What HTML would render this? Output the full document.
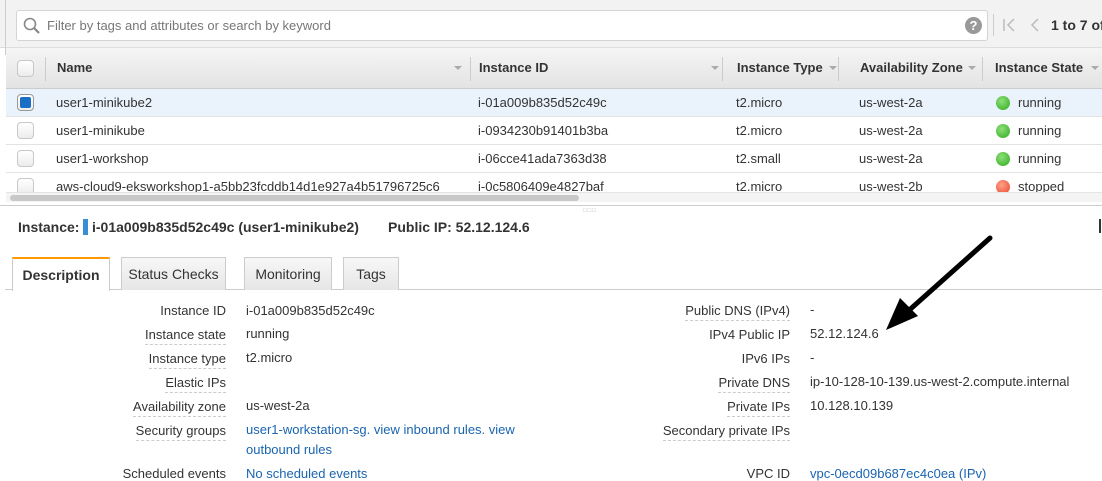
<!DOCTYPE html><html><head><style>
*{box-sizing:border-box;margin:0;padding:0}
body{width:1102px;height:470px;overflow:hidden;background:#fff;font-family:"Liberation Sans",Arial,sans-serif;font-size:13px;color:#333;position:relative}
.a{position:absolute;white-space:nowrap}
.top{position:absolute;left:0;top:0;width:1102px;height:48px;background:#f2f2f2;border-bottom:1px solid #ddd}
.search{position:absolute;left:16px;top:10px;width:972px;height:31px;background:#fff;border:1px solid #d4d4d4;border-radius:3px}
.hdr{position:absolute;left:6px;top:48px;width:1096px;height:41px;background:linear-gradient(#f5f5f5,#e3e3e3);border-bottom:1px solid #ccc}
.hdr b{position:absolute;top:12px;font-size:13px;color:#333}
.sep{position:absolute;top:9px;width:1px;height:24px;background:#ccc}
.arr{position:absolute;top:18px;width:0;height:0;border-left:4px solid transparent;border-right:4px solid transparent;border-top:4px solid #aaa}
.row{position:absolute;left:6px;width:1096px;height:28px;border-bottom:1px solid #e2e2e2}
.row span{position:absolute;top:6px}
.cb{position:absolute;left:11px;top:5px;width:17px;height:17px;border:1px solid #c8c8c8;border-radius:4px;background:linear-gradient(#fff,#ececec)}
.dot{position:absolute;left:990px;top:7px;width:14px;height:14px;border-radius:50%}
.lbl{position:absolute;text-align:right;white-space:nowrap;border-bottom:1px dashed #ccc;padding-bottom:2px}
.tab{position:absolute;top:257px;height:33px;border:1px solid #ccc;border-bottom:none;background:linear-gradient(#f7f7f7,#e6e6e6);font-size:14px;padding-top:8px;text-align:center;color:#333}
</style></head><body>
<div class="top"></div>
<div class="a" style="left:5px;top:0;width:1px;height:55px;background:#ccc"></div>
<div class="search">
<svg class="a" style="left:6px;top:6px" width="18" height="18" viewBox="0 0 18 18"><circle cx="7" cy="7" r="5.5" fill="none" stroke="#888" stroke-width="1.6"/><path d="M11 11L16 16" stroke="#888" stroke-width="2.2"/></svg>
<span class="a" style="left:30px;top:7px;color:#777">Filter by tags and attributes or search by keyword</span>
<div class="a" style="left:948px;top:6px;width:17px;height:17px;border-radius:50%;background:#999;color:#fff;font-weight:bold;font-size:13px;text-align:center;line-height:17px">?</div>
</div>
<div class="a" style="left:993px;top:14px;width:1px;height:22px;background:#ccc"></div>
<svg class="a" style="left:1002px;top:17px" width="40" height="16"><path d="M2 2V14M12 2L6 8L12 14M36 2L30 8L36 14" fill="none" stroke="#bbb" stroke-width="1.5"/></svg>
<div class="a" style="left:1051px;top:17px;font-weight:bold;font-size:14px">1 to 7 of</div>
<div class="hdr">
<div class="cb" style="top:12px"></div>
<div class="sep" style="left:39px"></div>
<b style="left:51px">Name</b><div class="arr" style="left:448px"></div><div class="sep" style="left:464px"></div>
<b style="left:473px">Instance ID</b><div class="arr" style="left:705px"></div><div class="sep" style="left:716px"></div>
<b style="left:731px">Instance Type</b><div class="arr" style="left:823px"></div><div class="sep" style="left:832px"></div>
<b style="left:854px">Availability Zone</b><div class="arr" style="left:962px"></div><div class="sep" style="left:976px"></div>
<b style="left:989px">Instance State</b><div class="arr" style="left:1085px"></div>
</div>
<div class="row" style="top:89px;background:#eaf3fc"><div class="cb" style="border-color:#999"><div class="a" style="left:2px;top:2px;width:11px;height:11px;border-radius:2px;background:#1a6fc4"></div></div><span style="left:50px">user1-minikube2</span><span style="left:472px">i-01a009b835d52c49c</span><span style="left:730px">t2.micro</span><span style="left:853px">us-west-2a</span><div class="dot" style="background:radial-gradient(circle at 40% 35%,#8ee07a,#2eaa1e)"></div><span style="left:1012px">running</span></div>
<div class="row" style="top:117px"><div class="cb"></div><span style="left:50px">user1-minikube</span><span style="left:472px">i-0934230b91401b3ba</span><span style="left:730px">t2.micro</span><span style="left:853px">us-west-2a</span><div class="dot" style="background:radial-gradient(circle at 40% 35%,#8ee07a,#2eaa1e)"></div><span style="left:1012px">running</span></div>
<div class="row" style="top:145px"><div class="cb"></div><span style="left:50px">user1-workshop</span><span style="left:472px">i-06cce41ada7363d38</span><span style="left:730px">t2.small</span><span style="left:853px">us-west-2a</span><div class="dot" style="background:radial-gradient(circle at 40% 35%,#8ee07a,#2eaa1e)"></div><span style="left:1012px">running</span></div>
<div class="row" style="top:173px;height:19px;overflow:hidden;border:none"><div class="cb"></div><span style="left:50px">aws-cloud9-eksworkshop1-a5bb23fcddb14d1e927a4b51796725c6</span><span style="left:472px">i-0c5806409e4827baf</span><span style="left:730px">t2.micro</span><span style="left:853px">us-west-2b</span><div class="dot" style="background:radial-gradient(circle at 40% 35%,#ffa08a,#e8452a)"></div><span style="left:1012px">stopped</span></div>
<div class="a" style="left:6px;top:192px;width:1096px;height:10px;background:#f4f4f4;border-top:1px solid #e4e4e4"></div>
<div class="a" style="left:10px;top:195px;width:569px;height:6px;border-radius:3px;background:#c8c8c8"></div>
<div class="a" style="left:0;top:205px;width:1102px;height:1px;background:#ccc"></div>
<div class="a" style="left:583px;top:208px;font-size:6px;color:#bbb;letter-spacing:1px">□□□</div>
<div class="a" style="left:18px;top:219px;font-weight:bold;font-size:14px">Instance:</div>
<div class="a" style="left:83px;top:219px;width:5px;height:16px;background:#3a8fd4"></div>
<div class="a" style="left:92px;top:219px;font-weight:bold;font-size:14px">i-01a009b835d52c49c (user1-minikube2)</div>
<div class="a" style="left:388px;top:219px;font-weight:bold;font-size:14px">Public IP: 52.12.124.6</div>
<div class="a" style="left:1099px;top:219px;width:2px;height:14px;background:#333"></div>
<div class="a" style="left:5px;top:289px;width:1097px;height:1px;background:#ccc"></div>
<div class="tab" style="left:12px;width:98px;background:#fff;height:34px;border-top:2px solid #f90;font-weight:bold">Description</div>
<div class="tab" style="left:121px;width:105px">Status Checks</div>
<div class="tab" style="left:244px;width:88px">Monitoring</div>
<div class="tab" style="left:343px;width:56px">Tags</div>
<div class="lbl" style="right:876px;top:303px;border:none">Instance ID</div><div class="a" style="left:246px;top:303px">i-01a009b835d52c49c</div>
<div class="lbl" style="right:876px;top:327px">Instance state</div><div class="a" style="left:246px;top:326px">running</div>
<div class="lbl" style="right:876px;top:351px">Instance type</div><div class="a" style="left:246px;top:350px">t2.micro</div>
<div class="lbl" style="right:876px;top:375px">Elastic IPs</div>
<div class="lbl" style="right:876px;top:399px">Availability zone</div><div class="a" style="left:246px;top:398px">us-west-2a</div>
<div class="lbl" style="right:876px;top:423px">Security groups</div><div class="a" style="left:246px;top:422px;color:#1a64b0">user1-workstation-sg. view inbound rules. view</div>
<div class="a" style="left:246px;top:442px;color:#1a64b0">outbound rules</div>
<div class="a" style="right:876px;top:466px">Scheduled events</div><div class="a" style="left:246px;top:466px;color:#1a64b0">No scheduled events</div>
<div class="lbl" style="right:312px;top:303px">Public DNS (IPv4)</div><div class="a" style="left:810px;top:302px">-</div>
<div class="lbl" style="right:312px;top:327px;border:none">IPv4 Public IP</div><div class="a" style="left:810px;top:326px">52.12.124.6</div>
<div class="lbl" style="right:312px;top:351px;border:none">IPv6 IPs</div><div class="a" style="left:810px;top:350px">-</div>
<div class="lbl" style="right:312px;top:375px">Private DNS</div><div class="a" style="left:810px;top:374px">ip-10-128-10-139.us-west-2.compute.internal</div>
<div class="lbl" style="right:312px;top:399px">Private IPs</div><div class="a" style="left:810px;top:398px">10.128.10.139</div>
<div class="lbl" style="right:312px;top:423px">Secondary private IPs</div>
<div class="a" style="right:312px;top:466px">VPC ID</div><div class="a" style="left:810px;top:466px;color:#1a64b0">vpc-0ecd09b687ec4c0ea (IPv)</div>
<svg class="a" style="left:0;top:0" width="1102" height="470"><path d="M990 238L906 313" stroke="#000" stroke-width="5" stroke-linecap="round"/><path d="M886 330L900 298L918 316Z" fill="#000"/></svg>
</body></html>
